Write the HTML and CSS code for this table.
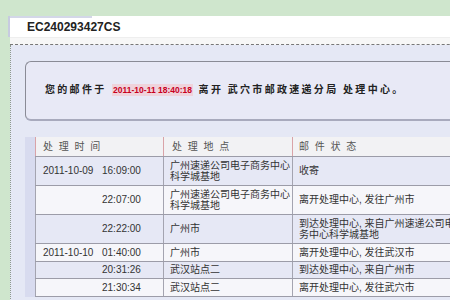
FILE: index.html
```html
<!DOCTYPE html>
<html>
<head>
<meta charset="utf-8">
<link rel="stylesheet" href="styles.css">
</head>
<body>
<div class="page">
  <div class="header"><span class="mailno">EC240293427CS</span></div>
  <div class="header-gap"></div>
  <div class="content">
    <div class="notice">
      <p class="notice-text">您的邮件于 <span class="stamp">2011-10-11 18:40:18</span> 离开 武穴市邮政速递分局 处理中心。</p>
    </div>
    <div class="table-wrap">
      <table class="track">
        <colgroup><col class="c1"><col class="c2"><col class="c3"></colgroup>
        <thead>
          <tr><th>处 理 时 间</th><th>处 理 地 点</th><th>邮 件 状 态</th></tr>
        </thead>
        <tbody>
          <tr class="odd"><td><span class="date">2011-10-09</span><span class="time">16:09:00</span></td><td>广州速递公司电子商务中心科学城基地</td><td>收寄</td></tr>
          <tr class="even"><td><span class="date"></span><span class="time">22:07:00</span></td><td>广州速递公司电子商务中心科学城基地</td><td>离开处理中心, 发往广州市</td></tr>
          <tr class="odd"><td><span class="date"></span><span class="time">22:22:00</span></td><td>广州市</td><td>到达处理中心, 来自广州速递公司电子商务中心科学城基地</td></tr>
          <tr class="even"><td><span class="date">2011-10-10</span><span class="time">01:40:00</span></td><td>广州市</td><td>离开处理中心, 发往武汉市</td></tr>
          <tr class="odd"><td><span class="date"></span><span class="time">20:31:26</span></td><td>武汉站点二</td><td>到达处理中心, 来自广州市</td></tr>
          <tr class="even"><td><span class="date"></span><span class="time">21:30:34</span></td><td>武汉站点二</td><td>离开处理中心, 发往武穴市</td></tr>
        </tbody>
      </table>
    </div>
  </div>
</div>
</body>
</html>
```

FILE: styles.css
```css
html, body {
  margin: 0;
  padding: 0;
}
body {
  width: 450px;
  height: 300px;
  overflow: hidden;
  background: #cfe6cd;
  font-family: "Liberation Sans", "Noto Sans CJK SC", sans-serif;
}
.page {
  padding-top: 16px;
  width: 520px;
}
.header {
  position: relative;
  margin-left: 8px;
  height: 21px;
  background: #ffffff;
  border-left: 2px solid #c7cbe0;
  padding-left: 17px;
  display: flex;
  align-items: center;
}
.header::before {
  content: "";
  position: absolute;
  left: 0;
  top: 0;
  width: 82px;
  height: 2px;
  background: #d3d7e8;
}
.mailno {
  font-size: 12px;
  font-weight: bold;
  color: #222;
}
.header-gap {
  margin-left: 10px;
  height: 6px;
  background: #f7f7f7;
  border-top: 1px solid #eeeeee;
  border-bottom: 1px dashed #777;
}
.content {
  margin-left: 10px;
  border-left: 1px dotted #8e9a8e;
  background: #e5e8f5;
  padding: 16px 0 0 14px;
  height: 300px;
}
.notice {
  height: 57px;
  border: 1px solid #8a8b96;
  border-bottom: 2px solid #a8aabd;
  border-radius: 6px 0 0 6px;
  border-right: none;
  background: #e8e9f6;
  padding: 0 0 0 19px;
  display: flex;
  align-items: center;
}
.notice-text {
  margin: -4px 0 0 0;
  font-family: "Noto Sans CJK SC", sans-serif;
  font-size: 10px;
  font-weight: bold;
  letter-spacing: 2.3px;
  color: #222;
  white-space: nowrap;
}
.stamp {
  font-family: "Liberation Sans", sans-serif;
  font-size: 8.5px;
  letter-spacing: 0;
  color: #c8001e;
  background: #efd3db;
  padding: 1px 1px;
  margin: 0 1px;
}
.table-wrap {
  margin-top: 16px;
  background: #d8dbef;
  padding-left: 10px;
}
.track {
  border-collapse: collapse;
  table-layout: fixed;
  width: 440px;
  font-family: "Liberation Sans", "Noto Sans CJK SC", sans-serif;
  font-size: 10px;
  line-height: 11.5px;
  color: #333;
}
.c1 { width: 128px; }
.c2 { width: 129px; }
.c3 { width: 183px; }
.track th {
  text-align: left;
  font-weight: normal;
  color: #555;
  background: #f2f2f4;
  height: 19px;
  padding: 0 0 0 7px;
  letter-spacing: 1.5px;
  border-left: 1px solid #d9a3a8;
  border-bottom: 1px solid #9c9ca8;
}
.track th:nth-child(2) { padding-left: 8px; }
.track th:nth-child(3) { padding-left: 6px; }
.track td {
  padding: 2.5px 6px 2.5px 7px;
  border-left: 1px solid #a4a4b0;
  border-bottom: 1px solid #9c9ca8;
  vertical-align: middle;
}
.track td:nth-child(2) { padding-left: 6px; padding-right: 0; }
.track td:nth-child(3) { padding-left: 6px; padding-right: 0; }
.track tr.odd td { background: #e6e8f5; }
.track tr.even td { background: #f6f6fa; }
.date {
  display: inline-block;
  width: 59px;
}
.time {
  display: inline-block;
}
```
